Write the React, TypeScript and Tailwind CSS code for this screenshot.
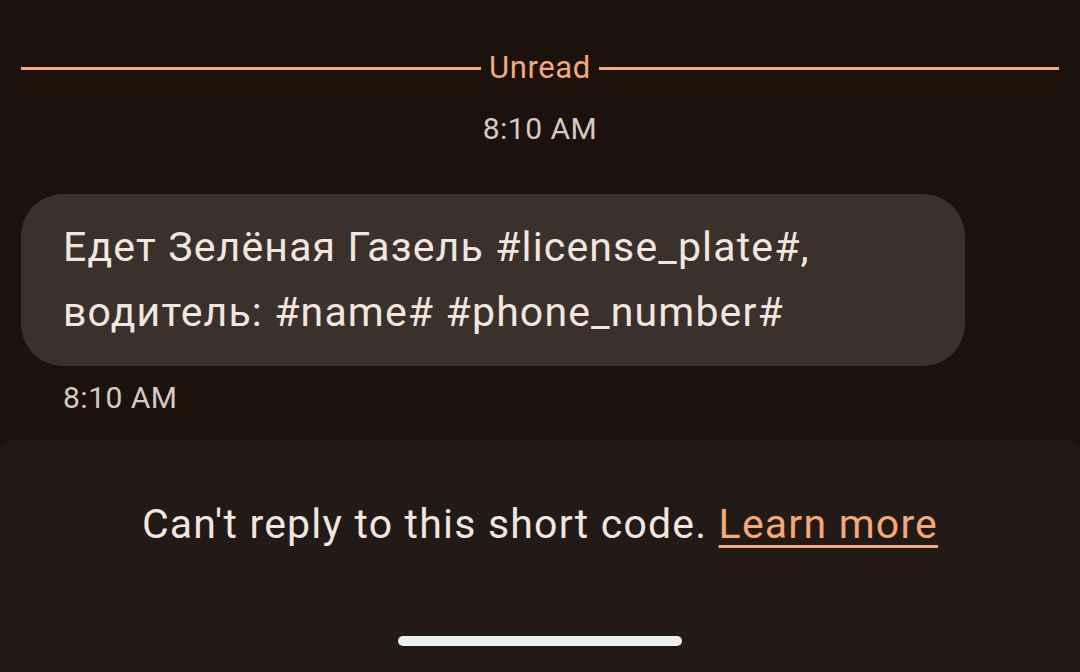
import React from "react";

export default function App() {
  return (
    <div
      className="w-[1080px] h-[672px] bg-[#1c120d] flex flex-col overflow-hidden"
      style={{ fontFamily: "Roboto, 'Noto Sans', sans-serif" }}
    >
      <div className="flex-1 flex flex-col">
        <div className="flex items-center gap-[8px] px-[21px] pt-[50px]">
          <div className="flex-1 h-[3px] bg-[#f5a878]" />
          <span className="text-[31px] leading-[36px] tracking-[0.6px] text-[#f5a878]">Unread</span>
          <div className="flex-1 h-[3px] bg-[#f5a878]" />
        </div>
        <div className="mt-[26px] text-center text-[30px] leading-[34px] tracking-[0.5px] text-[#d8cac1]">8:10 AM</div>
        <div className="mt-[48px] ml-[21px] w-[944px] rounded-[42px] bg-[#3a312c] pl-[42px] pr-[40px] pt-[21px] pb-[21px] text-[41px] leading-[65px] tracking-[1.15px] text-[#f3e6de]">
          Едет Зелёная Газель #license_plate#, водитель: #name# #phone_number#
        </div>
        <div className="mt-[15px] ml-[63px] text-[30px] leading-[34px] tracking-[0.5px] text-[#d8cac1]">8:10 AM</div>
      </div>
      <div className="h-[232px] bg-[#221a16] rounded-t-[12px] flex flex-col items-center">
        <div className="mt-[61px] text-[41px] leading-[46px] tracking-[1.2px] text-[#f3e6de]">
          Can't reply to this short code.{" "}
          <span className="text-[#f5a878] underline decoration-[3px] underline-offset-[7px]">Learn more</span>
        </div>
        <div className="mt-[89px] w-[284px] h-[10px] rounded-full bg-[#eceef0]" />
      </div>
    </div>
  );
}
